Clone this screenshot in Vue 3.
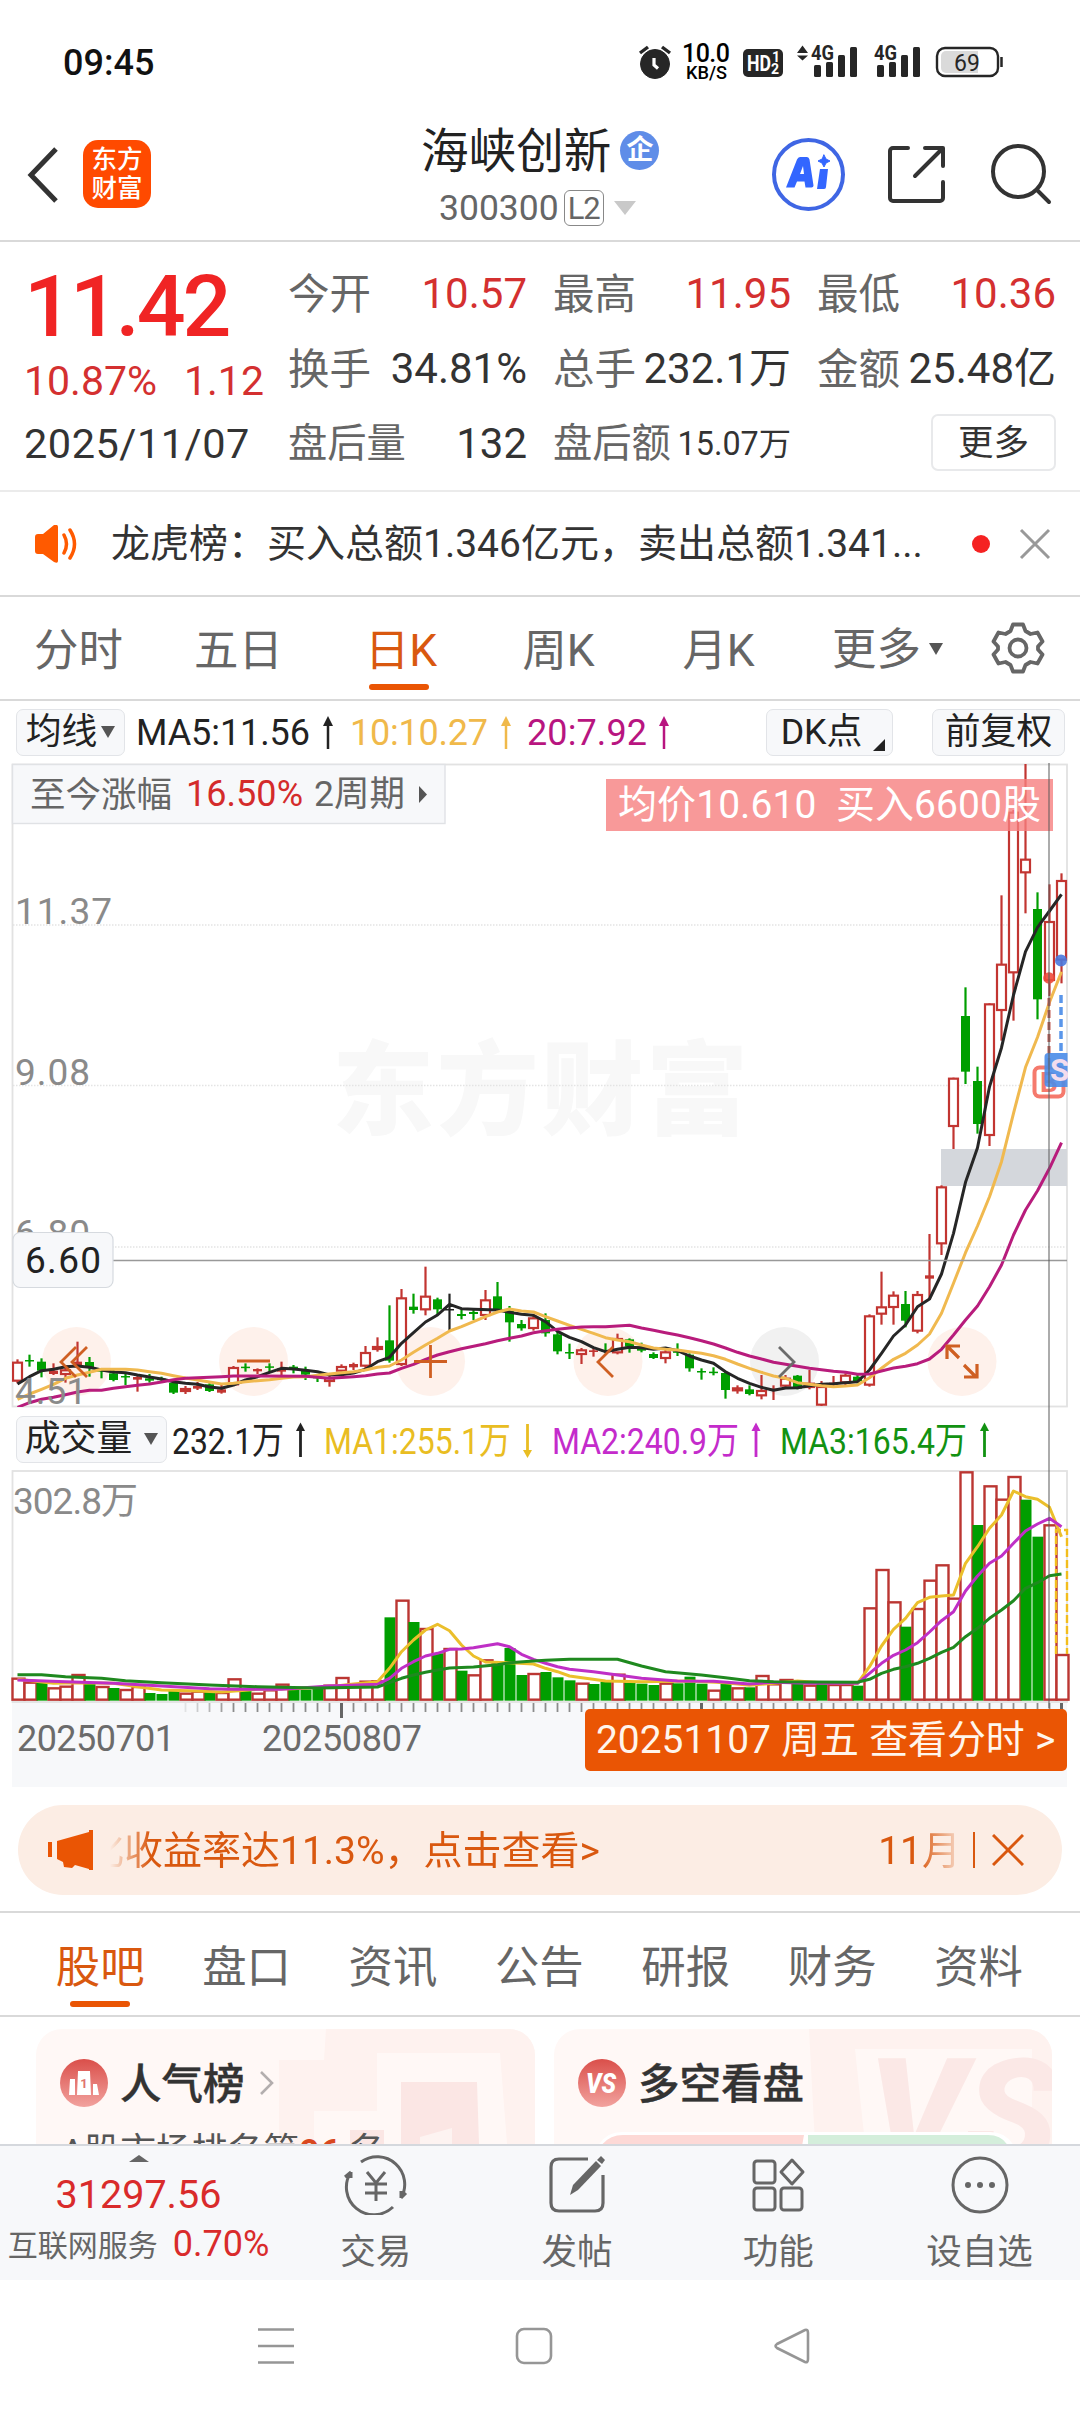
<script setup>
import { computed } from 'vue'

const stats = [
    { label: '今开', value: '10.57', up: true },
    { label: '最高', value: '11.95', up: true },
    { label: '最低', value: '10.36', up: true },
    { label: '换手', value: '34.81%' },
    { label: '总手', value: '232.1万' },
    { label: '金额', value: '25.48亿' },
    { label: '盘后量', value: '132', long: true },
    { label: '盘后额', value: '15.07万', long: true, small: true }
]
const periods = ['分时', '五日', '日K', '周K', '月K']
const sections = ['股吧', '盘口', '资讯', '公告', '研报', '财务', '资料']

const STEP = 12
const cx = (i) => 17.5 + i * STEP

// [kind, high, body top, body bottom, low] in thirds of a pixel from y = 1120
const rows = [
    'r 718 725 785 790', 'g 704 720 723 740', 'g 715 725 752 772', 'r 730 752 762 765', 'r 735 748 765 788',
    'r 665 725 735 740', 'g 711 726 742 770', 'g 745 750 755 775', 'g 750 760 780 784', 'g 759 768 771 795',
    'r 765 771 779 815', 'g 762 775 782 788', 'g 770 776 779 787', 'g 780 789 818 822', 'r 798 804 816 822',
    'r 786 798 806 810', 'g 790 793 813 816', 'r 795 808 818 821', 'r 738 741 796 798', 'g 730 740 744 755',
    'r 745 747 754 762', 'g 730 739 743 758', 'r 725 745 755 768', 'g 735 740 750 760', 'g 740 752 764 780',
    'g 762 770 775 786', 'r 768 772 786 800', 'r 733 738 755 760', 'r 728 732 742 750', 'r 678 696 740 745',
    'r 652 678 690 695', 'g 556 661 722 728', 'r 507 532 735 738', 'g 521 560 570 581', 'r 440 527 571 586',
    'g 533 538 568 586', 'k 521 567 570 630', 'g 568 582 588 598', 'g 568 576 582 600', 'r 510 538 588 600',
    'g 486 529 572 574', 'g 558 572 607 665', 'g 600 612 625 632', 'r 588 592 627 632', 'g 580 600 640 650',
    'g 635 643 694 703', 'g 671 696 700 717', 'r 684 688 705 732', 'r 685 691 696 710', 'g 670 690 694 700',
    'r 641 654 700 703', 'g 655 658 680 698', 'g 668 680 692 697', 'g 697 702 714 717', 'r 690 694 717 730',
    'g 670 694 698 708', 'g 700 704 745 755', 'g 745 753 757 779', 'g 742 755 759 766', 'g 755 759 810 836',
    'r 796 802 814 821', 'g 796 808 822 826', 'r 765 810 829 838', 'r 796 806 808 840', 'r 765 773 800 804',
    'g 765 767 806 808', 'r 750 788 804 808', 'r 783 798 857 858', 'r 768 788 793 798', 'r 760 764 790 795',
    'g 762 770 784 790', 'r 583 586 797 800', 'r 455 559 584 614', 'r 514 524 564 614', 'g 513 552 602 622',
    'r 513 522 635 640', 'r 342 466 476 540', 'r 196 199 373 405', 'r -127 -127 21 87', 'g -398 -312 -145 -108',
    'g -160 -117 12 41', 'r -350 -350 48 78', 'r -674 -469 -327 -238', 'r -930 -925 -440 -298', 'r -1068 -784 -740 -620',
    'g -683 -633 -362 -302', 'r -707 -597 -417 -372', 'r -740 -720 -478 -410'
]
const colors = { r: '#c23531', g: '#009e00', k: '#222222' }
const ky = (v) => 1120 + v / 3

const candles = rows.map((row, i) => {
    const [kind, ...n] = row.split(' ')
    const [high, top, bottom, low] = n.map((v) => ky(Number(v)))
    const hollow = kind === 'r' && bottom - top > 3.5
    return {
        x: cx(i),
        high, top, bottom, low,
        color: colors[kind],
        fill: hollow ? '#ffffff' : colors[kind],
        inset: hollow ? 1 : 0
    }
})

// moving averages, "index:value" pairs
const toPoints = (str, base) => str.split(' ').map((p) => {
    const [i, v] = p.split(':').map(Number)
    return `${cx(i)},${(base + v / 3).toFixed(1)}`
}).join(' ')

const ma5 = toPoints('0:792 1:770 2:752 3:748 4:740 5:738 6:742 7:750 8:756 9:758 10:765 11:771 12:777 13:785 14:790 15:793 16:801 17:805 18:795 19:780 20:770 21:757 22:745 23:747 24:751 25:755 26:765 27:764 28:759 29:748 30:725 31:712 32:670 33:638 34:606 35:585 36:553 37:566 38:568 40:570 41:577 42:583 43:586 44:605 45:634 46:652 47:665 48:683 49:695 50:688 51:682 52:683 53:688 54:684 55:692 56:708 57:720 58:730 59:755 60:775 61:790 62:802 63:811 64:804 65:803 66:797 67:793 68:791 69:788 70:785 71:750 72:700 73:648 74:615 75:560 76:537 77:462 78:340 79:187 80:83 81:-100 82:-217 83:-375 84:-505 85:-578 86:-627 87:-677', 1120)
const ma10 = toPoints('0:838 1:822 2:808 3:793 4:775 5:765 6:757 7:748 9:748 10:750 11:755 12:760 13:767 14:774 15:780 16:786 17:792 18:790 19:785 20:782 21:779 22:775 23:771 24:770 25:766 26:762 27:758 28:755 29:750 30:742 31:738 32:720 33:697 34:675 35:655 36:633 37:620 38:605 39:590 40:576 41:567 42:573 43:576 44:590 45:603 46:616 47:628 48:640 49:653 50:660 51:665 52:675 53:684 54:688 55:690 56:695 57:700 58:707 59:718 60:732 61:745 62:757 63:768 64:775 65:788 66:793 67:797 68:800 69:798 70:795 71:773 72:745 73:718 74:700 75:675 76:642 77:580 78:490 79:398 80:318 81:230 82:125 83:-20 84:-158 85:-248 86:-353 87:-445', 1120)
const ma20 = toPoints('0:862 1:848 2:838 3:832 4:824 5:816 6:811 7:811 8:805 9:800 10:796 11:792 12:786 13:779 14:775 15:773 17:770 18:768 20:768 24:769 26:775 28:770 29:767 30:762 31:759 32:745 33:733 34:718 35:705 36:695 37:686 38:679 39:671 40:662 41:655 42:648 43:638 44:632 45:628 46:624 47:621 48:620 49:620 51:616 52:624 53:631 54:638 55:645 56:653 57:662 58:672 59:684 60:697 61:708 62:717 63:727 64:733 65:739 66:745 67:749 68:754 69:757 70:763 71:762 72:753 73:744 74:739 75:731 76:717 77:688 78:645 79:600 80:558 81:500 82:435 83:345 84:270 85:212 86:145 87:68', 1120)

const volTops = [
    833, 845, 846, 862, 857, 822, 850, 858, 864, 867, 858, 879, 882, 873, 878, 872, 874, 876, 835, 872, 878, 868,
    851, 870, 869, 867, 854, 831, 856, 842, 841, 652, 599, 666, 684, 760, 744, 812, 823, 778, 788, 744, 825, 819,
    816, 832, 841, 848, 852, 846, 821, 848, 851, 855, 848, 850, 830, 851, 869, 849, 862, 862, 825, 850, 837, 850,
    854, 850, 852, 852, 857, 622, 507, 604, 680, 624, 539, 493, 593, 214, 375, 256, 296, 228, 299, 410, 373, 762
]
// r = up day, g = down day, 22 per chunk
const volColors = [
    'rrgrrrgrgrrgggrrgrrgrr',
    'rgggrrrrrgrgrgrgrrgggr',
    'gggrggrgggrgggrgrgrrrg',
    'rgrrgrrrgrrrrrgrrrggrr'
].join('')
const bars = computed(() => volTops.map((t, i) => ({
    x: cx(i),
    y: 1400 + t / 3,
    h: (902 - t) / 3,
    up: volColors[i] === 'r'
})))
const vma1 = toPoints('0:838 3:850 5:848 8:850 10:860 12:870 15:873 17:876 20:868 23:866 26:860 28:852 30:845 31:805 32:755 33:720 34:690 35:673 36:692 37:735 38:768 39:786 41:788 43:792 44:805 45:815 46:828 49:843 52:845 56:843 59:848 61:856 63:850 65:843 67:848 70:850 71:800 72:738 73:688 74:655 75:608 76:592 77:588 78:585 79:490 80:440 81:385 82:345 83:273 84:290 85:298 86:322 87:410', 1400)
const vma2 = toPoints('0:840 4:845 8:850 12:858 16:866 18:868 22:868 26:858 30:853 31:835 32:805 33:785 34:768 35:760 36:748 37:747 38:743 39:737 40:731 41:740 42:763 43:778 44:790 45:800 46:808 48:815 50:825 52:835 55:843 58:844 61:852 63:847 66:850 70:850 71:820 72:790 73:766 74:750 75:728 76:696 77:662 78:635 79:573 80:528 81:490 82:468 83:430 84:393 85:372 86:355 87:380', 1400)
const vma3 = toPoints('0:824 2:824 4:830 7:835 9:842 12:848 16:855 20:860 25:864 30:861 31:848 32:835 33:825 34:817 35:810 36:804 38:801 40:794 41:788 43:783 44:781 46:778 50:778 52:798 54:815 57:825 59:833 61:842 63:845 66:846 70:847 71:838 72:820 73:808 74:800 75:790 76:775 77:757 78:742 79:710 80:685 81:655 82:630 83:602 84:565 85:548 86:527 87:522', 1400)

const ticks = Array.from({ length: 74 }, (_, n) => {
    const i = n + 14
    return { x: cx(i), big: i === 27 || i === 57 || i === 87, fade: Math.min(1, (n + 1) / 5) }
})
const grid = [925, 1085.5, 1247]
</script>

<template>
    <div class="phone">
        <header class="status">
            <span class="clock">09:45</span>
            <svg class="status-icons" width="400" height="60" viewBox="620 33 400 60">
                <g fill="#262626" stroke="#262626">
                    <circle cx="655" cy="64" r="14.5" />
                    <path d="M640 53l8-6M662 47l8 6" stroke-width="3.4" fill="none" />
                    <path d="M654 58v7l4 3.5" stroke="#fff" stroke-width="3.2" fill="none" />
                </g>
                <text x="682" y="62" font-size="25" font-weight="500" textLength="48">10.0</text>
                <text x="686" y="79" font-size="18.5" font-weight="500" textLength="41" lengthAdjust="spacingAndGlyphs">KB/S</text>
                <rect x="743" y="49" width="40" height="28" rx="5" fill="#262626" />
                <text x="747" y="71" font-size="22" font-weight="700" fill="#fff" textLength="24" lengthAdjust="spacingAndGlyphs">HD</text>
                <text x="772" y="62" font-size="14" font-weight="700" fill="#fff">1</text>
                <text x="771" y="74" font-size="14" font-weight="700" fill="#fff">2</text>
                <path d="M797 53l5.500-7.500 5.500 7.500zM797 55.500h11l-5.500 5z" fill="#262626" />
                <text x="811" y="60" font-size="21" font-weight="700" fill="#262626" textLength="23" lengthAdjust="spacingAndGlyphs">4G</text>
                <text x="874" y="60" font-size="21" font-weight="700" fill="#262626" textLength="23" lengthAdjust="spacingAndGlyphs">4G</text>
                <g fill="#262626">
                    <rect x="814" y="65" width="7" height="12" rx="1.500" />
                    <rect x="826" y="62" width="7" height="15" rx="1.500" />
                    <rect x="838" y="55" width="7" height="22" rx="1.500" />
                    <rect x="850" y="47" width="7" height="30" rx="1.500" />
                    <rect x="877" y="65" width="7" height="12" rx="1.500" />
                    <rect x="889" y="62" width="7" height="15" rx="1.500" />
                    <rect x="901" y="55" width="7" height="22" rx="1.500" />
                    <rect x="913" y="47" width="7" height="30" rx="1.500" />
                </g>
                <rect x="937" y="48" width="61" height="28" rx="8" fill="#fff" stroke="#262626" stroke-width="2.400" />
                <path d="M946 51h32v22h-32a5 5 0 0 1-5-5v-12a5 5 0 0 1 5-5z" fill="#dadada" />
                <path d="M1001.500 57v10" stroke="#262626" stroke-width="2.500" />
                <text x="967" y="70.500" font-size="23" fill="#262626" text-anchor="middle">69</text>
            </svg>
        </header>

        <div class="titlebar">
            <svg class="back" width="36" height="60" viewBox="0 0 36 60">
                <path d="M31 4L6 30l25 26" fill="none" stroke="#333" stroke-width="5" />
            </svg>
            <div class="logo"><span>东方</span><span>财富</span></div>
            <div class="name">
                <div class="name-row">海峡创新<i class="badge">企</i></div>
                <div class="code-row">300300<b>L2</b><i class="tri"></i></div>
            </div>
            <svg class="tools" width="290" height="80" viewBox="770 134 290 80" fill="none" stroke="#333" stroke-width="4" stroke-linecap="round" stroke-linejoin="round">
                <circle cx="808.500" cy="174.500" r="34.500" stroke="#3f66e4" />
                <path d="M786 187.500l11-28q1-2.500 3-2.500h7q2 0 2.500 2.500l4 26q0 2-2 2h-6l-1-6h-7.500l-2.500 6zM800 174h4l-1-8z" fill="#3366ff" stroke="none" fill-rule="evenodd" />
                <path d="M820 169h8l-2 18q0 2-2 2h-7z" fill="#3366ff" stroke="none" />
                <path d="M824 155l2 4 4 2-4 2-2 4-2-4-4-2 4-2z" fill="#3366ff" stroke="#3366ff" stroke-width="1" />
                <path d="M908 148h-15a3 3 0 0 0-3 3v47a3 3 0 0 0 3 3h47a3 3 0 0 0 3-3v-16M925 148h18v18M942 149l-27 27" />
                <circle cx="1018.500" cy="171.500" r="25.500" />
                <path d="M1037 190l12 12" />
            </svg>
        </div>

        <section class="quote">
            <div class="price">
                <div class="last">11.42</div>
                <div class="change"><span>10.87%</span><span>1.12</span></div>
                <div class="date">2025/11/07</div>
            </div>
            <div class="stats">
                <div v-for="s in stats" :key="s.label" class="stat">
                    <span class="label" :class="{ long: s.long }">{{ s.label }}</span>
                    <span class="value" :class="{ up: s.up, small: s.small }">{{ s.value }}</span>
                </div>
                <div class="stat more-cell"><button class="more">更多</button></div>
            </div>
        </section>

        <section class="notice">
            <svg width="46" height="38" viewBox="33 524 46 38">
                <path d="M35 536q0-3 3-3h5l11-9q4-1 4 2v34q0 3-4 1l-11-8h-5q-3 0-3-3z" fill="#ff5a00" />
                <path d="M64 534q5 9 0 18M70 529q9 14 0 28" fill="none" stroke="#ff5a00" stroke-width="3.500" stroke-linecap="round" />
            </svg>
            <span class="notice-text">龙虎榜：买入总额1.346亿元，卖出总额1.341...</span>
            <i class="dot"></i>
            <svg width="32" height="32" viewBox="0 0 32 32">
                <path d="M2 2l28 28M30 2L2 30" stroke="#999" stroke-width="3" />
            </svg>
        </section>

        <nav class="periods">
            <div v-for="p in periods" :key="p" class="period" :class="{ active: p === '日K' }">{{ p }}</div>
            <div class="period-more">更多<i></i></div>
            <svg width="56" height="56" viewBox="-28 -28 56 56" fill="none" stroke="#666" stroke-width="3.800" stroke-linejoin="round">
                <path d="M-5-23.500h10l2.500 6.500 5 3 7-1.500 5 9-4.500 5v3l4.500 5-5 9-7-1.500-5 3L5 23.500H-5L-7.500 17l-5-3-7 1.500-5-9 4.500-5v-3l-4.500-5 5-9 7 1.500 5-3z" />
                <circle r="8.500" />
            </svg>
        </nav>

        <div class="charts">
            <div class="ma-row">
                <button class="chip avg">均线<i></i></button>
                <svg class="ma-texts" width="570" height="62" viewBox="130 701 570 62">
                    <text x="136" y="745" font-size="36" fill="#222" textLength="174">MA5:11.56</text>
                    <text x="350" y="745" font-size="36" fill="#f0b94a" textLength="138">10:10.27</text>
                    <text x="527" y="745" font-size="36" fill="#b81580" textLength="120">20:7.92</text>
                    <g stroke-width="2.500">
                        <path d="M328 749v-28" stroke="#222" /><path d="M323 726l5-10 5 10z" fill="#222" />
                        <path d="M506 749v-28" stroke="#f0b94a" /><path d="M501 726l5-10 5 10z" fill="#f0b94a" />
                        <path d="M664 749v-28" stroke="#b81580" /><path d="M659 726l5-10 5 10z" fill="#b81580" />
                    </g>
                </svg>
                <button class="chip dk">DK点<i></i></button>
                <button class="chip adj">前复权</button>
            </div>

            <svg class="kline" width="1080" height="645" viewBox="0 763 1080 645">
                <defs>
                    <clipPath id="kclip"><rect x="12" y="764" width="1056" height="643" /></clipPath>
                </defs>
                <text x="540" y="1127" text-anchor="middle" font-size="102" font-weight="900" fill="#f8f8f8" textLength="416">东方财富</text>
                <line v-for="g in grid" :key="g" x1="13" x2="1067" :y1="g" :y2="g" stroke="#e4e4e4" stroke-width="1.500" stroke-dasharray="1.500 1.500" />
                <rect x="12.500" y="764.500" width="1054.500" height="642" fill="none" stroke="#e2e2e2" stroke-width="1.800" />
                <circle v-for="x in [76.500, 253.500, 430.500, 608, 962]" :key="x" :cx="x" cy="1361.500" r="34.500" fill="#fef1eb" />
                <circle cx="784.500" cy="1361.500" r="34.500" fill="#f1f1f1" />
                <rect x="941" y="1149" width="126" height="37" fill="#d4d7dc" />
                <g clip-path="url(#kclip)">
                    <g v-for="(c, i) in candles" :key="i">
                        <line :x1="c.x" :x2="c.x" :y1="c.high" :y2="c.low" :stroke="c.color" stroke-width="2.200" />
                        <rect
                            :x="c.x - 4.5" :y="c.top + c.inset"
                            :width="9" :height="Math.max(1.5, c.bottom - c.top - c.inset * 2)"
                            :fill="c.fill" :stroke="c.inset ? c.color : 'none'" stroke-width="2.200"
                        />
                    </g>
                    <g fill="none" stroke-width="3" stroke-linejoin="round">
                        <polyline :points="ma5" stroke="#262626" />
                        <polyline :points="ma10" stroke="#f0b94f" />
                        <polyline :points="ma20" stroke="#b81c7c" />
                    </g>
                </g>
                <!-- trade markers -->
                <g>
                    <circle cx="1049" cy="978" r="5.800" fill="#ee4b3c" opacity="0.9" />
                    <circle cx="1061" cy="960.500" r="6" fill="#4a78dd" opacity="0.9" />
                    <path d="M1049 998v70" stroke="#c25a50" stroke-width="3" stroke-dasharray="8 4" />
                    <path d="M1061 995v58" stroke="#5a96ea" stroke-width="3.500" stroke-dasharray="8 4" />
                    <rect x="1034.500" y="1067.500" width="29" height="29" rx="5" fill="#fff" stroke="#f57a6d" stroke-width="4" />
                    <text x="1049" y="1092" font-size="28" font-weight="700" fill="#f57a6d" text-anchor="middle">B</text>
                    <path d="M1067.500 1053h-19a4 4 0 0 0-4 4v26a4 4 0 0 0 4 4h19z" fill="#4a8ce8" fill-opacity="0.9" />
                    <svg x="1044" y="1053" width="24" height="34" viewBox="1044 1053 24 34">
                        <text x="1050" y="1081" font-size="31" font-weight="700" fill="#f3dcee">S</text>
                    </svg>
                </g>
                <g font-size="37" fill="#8a8a8a">
                    <text x="15" y="924" textLength="97">11.37</text>
                    <text x="15" y="1085" textLength="75">9.08</text>
                    <text x="15" y="1246" textLength="75">6.80</text>
                    <text x="15" y="1404" textLength="72">4.51</text>
                </g>
                <!-- chart controls -->
                <g fill="none" stroke="#cf5f22" stroke-width="2.800">
                    <path d="M76 1347l-15 15 15 15M87 1347l-15 15 15 15" />
                    <path d="M237 1361h33M414 1361.500h33M430.500 1345v33" />
                    <path d="M613 1347l-15 15 15 15" />
                    <path d="M779 1347l15 15-15 15" stroke="#6b6b6b" />
                    <path d="M947 1359v-13h13M947 1346l12 12M977 1364v13h-13M964 1365l12 12" stroke-width="3.200" />
                </g>
                <line x1="113" x2="1067" y1="1260.500" y2="1260.500" stroke="#999" stroke-width="1.600" />
                <rect x="13" y="1232.500" width="100" height="55" rx="7" fill="#f7f8fa" stroke="#d6dadf" stroke-width="1.200" />
                <text x="25" y="1272.500" font-size="37" fill="#222" textLength="76">6.60</text>
                <!-- buy price banner -->
                <rect x="606" y="779" width="447" height="52" fill="#f68080" opacity="0.8" />
                <text x="618" y="818" font-size="39" fill="#fff" textLength="423">均价10.610&#160;&#160;买入6600股</text>
                <!-- gain since -->
                <rect x="12.500" y="764.500" width="432.500" height="59" fill="#f7f8fa" stroke="#e0e2e5" stroke-width="1.400" />
                <text x="30" y="807" font-size="35.500" fill="#666">至今涨幅</text>
                <text x="186" y="806" font-size="36" fill="#d42b2b" textLength="117">16.50%</text>
                <text x="314" y="806" font-size="35.500" fill="#666">2周期</text>
                <path d="M419 786l8 8.500-8 8.500z" fill="#555" />
            </svg>

            <div class="vol-row">
                <button class="chip vol">成交量<i></i></button>
                <svg width="900" height="62" viewBox="168 1408 900 62">
                    <g font-size="37">
                        <text x="172" y="1453.500" fill="#222" textLength="112" lengthAdjust="spacingAndGlyphs">232.1万</text>
                        <text x="324" y="1453.500" fill="#e9bd22" textLength="187" lengthAdjust="spacingAndGlyphs">MA1:255.1万</text>
                        <text x="552" y="1453.500" fill="#c42bcb" textLength="187" lengthAdjust="spacingAndGlyphs">MA2:240.9万</text>
                        <text x="780" y="1453.500" fill="#129212" textLength="187" lengthAdjust="spacingAndGlyphs">MA3:165.4万</text>
                    </g>
                    <g stroke-width="2.800">
                        <path d="M300.500 1457v-26" stroke="#222" /><path d="M296 1431l4.500-8.500 4.500 8.500z" fill="#222" />
                        <path d="M527.500 1424v26" stroke="#e9bd22" /><path d="M523 1450l4.500 8 4.500-8z" fill="#e9bd22" />
                        <path d="M756 1457v-26" stroke="#c42bcb" /><path d="M751.500 1431l4.500-8.500 4.500 8.500z" fill="#c42bcb" />
                        <path d="M984.500 1457v-26" stroke="#129212" /><path d="M980 1431l4.500-8.500 4.500 8.500z" fill="#129212" />
                    </g>
                </svg>
            </div>

            <svg class="volume" width="1080" height="317" viewBox="0 1470 1080 317">
                <rect x="12" y="1702" width="1055" height="85" fill="#f7f8fa" />
                <rect x="12.500" y="1471" width="1054.500" height="231" fill="none" stroke="#e2e2e2" stroke-width="1.800" />
                <text x="13" y="1514" font-size="37" fill="#8a8a8a" textLength="125">302.8万</text>
                <g v-for="(b, i) in bars" :key="i">
                    <rect v-if="b.up" :x="b.x - 5" :y="b.y + 1" width="12" :height="b.h - 2" fill="#fff" stroke="#bb3632" stroke-width="2.400" />
                    <rect v-else :x="b.x - 5" :y="b.y" width="11" :height="b.h" fill="#009e00" />
                </g>
                <path d="M1056 1654v-124h11v124" fill="none" stroke="#f2bd1d" stroke-width="2.400" stroke-dasharray="8 3" />
                <g fill="none" stroke-width="3" stroke-linejoin="round">
                    <polyline :points="vma1" stroke="#ebbf2b" />
                    <polyline :points="vma2" stroke="#bf2fc6" />
                    <polyline :points="vma3" stroke="#1f891f" />
                </g>
                <line
                    v-for="t in ticks" :key="t.x" :x1="t.x" :x2="t.x" y1="1703" :y2="t.big ? 1718 : 1712"
                    :stroke="t.big ? '#666' : '#8c8c8c'" :stroke-width="t.big ? 3 : 1.8" :opacity="t.fade"
                />
                <text x="17" y="1751" font-size="36" fill="#6b6b6b" textLength="158">20250701</text>
                <text x="262" y="1751" font-size="36" fill="#6b6b6b" textLength="160">20250807</text>
            </svg>
            <div class="crosshair"></div>
            <div class="day-link">20251107 周五 查看分时 &gt;</div>
        </div>

        <section class="ad-wrap">
            <div class="ad">
                <svg width="46" height="40" viewBox="47 1830 46 40" fill="#ea5504">
                    <path d="M48 1842h4v15h-4zM57 1841l32-9h4v37h-4l-14-4-3 3-8-1-1-5-6-3z" />
                    <path d="M89 1830h4v40h-4z" />
                </svg>
                <div class="ad-text"><span class="roll">化收益率达11.3%，点击查看&gt;</span><span class="next">11月</span></div>
                <i class="ad-line"></i>
                <svg width="32" height="32" viewBox="0 0 32 32"><path d="M1 1l30 30M31 1L1 31" stroke="#d9580f" stroke-width="3" /></svg>
            </div>
        </section>

        <nav class="sections">
            <div v-for="s in sections" :key="s" :class="{ active: s === '股吧' }">{{ s }}</div>
        </nav>

        <section class="cards">
            <div class="card">
                <svg class="card-bg" width="499" height="115" viewBox="36 2029 499 115">
                    <path d="M326 2029h209v115h-28L500 2053H377v58h-63v33h-35V2060h45z" fill="#fef2ef" />
                    <path d="M401 2082h76l2 62h-78zM350 2130h34v14h-34z" fill="#fbe6e4" />
                    <path d="M420 2137l32-9v16h-32z" fill="#fdf3f1" />
                </svg>
                <div class="card-head">
                    <svg width="48" height="48" viewBox="0 0 48 48">
                        <defs><linearGradient id="red" x1="0" y1="0" x2="0" y2="1"><stop offset="0" stop-color="#da4f4a" /><stop offset="1" stop-color="#f2a29e" /></linearGradient></defs>
                        <circle cx="24" cy="24" r="24" fill="url(#red)" />
                        <path d="M10 20h5v16H9zM18 12h12l1 24H17zM33 25h4l2 11h-6z" fill="#fff" />
                        <text x="24" y="29" font-size="13" font-weight="700" fill="#e0746f" text-anchor="middle">1</text>
                    </svg>
                    <b>人气榜</b>
                    <svg class="arrow" width="16" height="26" viewBox="0 0 16 26"><path d="M2 2l11 11L2 24" fill="none" stroke="#b3aeae" stroke-width="2.600" /></svg>
                </div>
                <p>A股市场排名第<b>96</b> 名</p>
            </div>
            <div class="card">
                <svg class="card-bg" width="498" height="115" viewBox="554 2029 498 115">
                    <path d="M809 2029h243v115h-20V2049H855l10 95h-50z" fill="#fef2ef" />
                    <text x="868" y="2165" font-size="150" font-weight="900" font-style="italic" fill="#fbe8e6" textLength="190" lengthAdjust="spacingAndGlyphs">VS</text>
                    <path d="M598 2146q8-14 24-14h368q16 0 24 14" fill="#fff" />
                    <path d="M601 2146q8-11 22-11h181l-2 11z" fill="#fdd9d6" />
                    <path d="M808 2135h180q14 0 20 11H808z" fill="#d4eedb" />
                </svg>
                <div class="card-head">
                    <svg width="48" height="48" viewBox="0 0 48 48">
                        <circle cx="24" cy="24" r="24" fill="url(#red)" />
                        <text x="23" y="34" font-size="27" font-weight="900" font-style="italic" fill="#fff" text-anchor="middle" textLength="30" lengthAdjust="spacingAndGlyphs">VS</text>
                    </svg>
                    <b>多空看盘</b>
                </div>
            </div>
        </section>

        <footer class="toolbar">
            <div class="index">
                <i class="caret"></i>
                <div class="index-value">31297.56</div>
                <div class="index-name">互联网服务<span>0.70%</span></div>
            </div>
            <div class="tool">
                <svg width="68" height="60" viewBox="-34 -30 68 60" fill="none" stroke="#666" stroke-width="3">
                    <path d="M-15-23A27.500 27.500 0 0 1 25 13M25 13l5-5M25 13V6M17 22A27.500 27.500 0 0 1-25-13M-25-13l-6 5M-25-13v6" />
                    <path d="M-9-13L0-2l9-11M0-2v18M-11-1h22M-11 8h22" />
                </svg>
                <span>交易</span>
            </div>
            <div class="tool">
                <svg width="60" height="60" viewBox="-30 -30 60 60" fill="none" stroke="#666" stroke-width="3.200">
                    <path d="M11-26h-29q-8 0-8 8v36q0 8 8 8h36q8 0 8-8v-28" />
                    <path d="M-7 10l3-10 23-24 5 5L1 5z" fill="#666" stroke="none" />
                    <path d="M20-25l4-4 4 4-3 4z" fill="#666" stroke="none" />
                </svg>
                <span>发帖</span>
            </div>
            <div class="tool">
                <svg width="60" height="60" viewBox="-30 -30 60 60" fill="none" stroke="#666" stroke-width="3" stroke-linejoin="round">
                    <rect x="-24" y="-24" width="21" height="22" rx="3" /><rect x="-24" y="3" width="21" height="22" rx="3" /><rect x="3" y="3" width="21" height="22" rx="3" />
                    <path d="M14-25l11 12-11 12L3-13z" />
                </svg>
                <span>功能</span>
            </div>
            <div class="tool">
                <svg width="60" height="60" viewBox="-30 -30 60 60">
                    <circle r="27" fill="none" stroke="#666" stroke-width="3" />
                    <g fill="#666"><circle cx="-12" r="3" /><circle r="3" /><circle cx="12" r="3" /></g>
                </svg>
                <span>设自选</span>
            </div>
        </footer>

        <div class="sysnav">
            <svg width="1080" height="132" viewBox="0 2280 1080 132" fill="none" stroke="#969696" stroke-width="2.600">
                <path d="M258 2329.500h36M258 2346h36M258 2362.500h36" />
                <rect x="517" y="2329" width="34" height="34" rx="7" />
                <path d="M805 2330q3-1 3 3v26q0 4-3 3l-28-14q-3-2 0-4z" />
            </svg>
        </div>
    </div>
</template>

<style>
body {
    margin: 0;
    background: #fff;
}
</style>

<style scoped>
.phone {
    width: 1080px;
    height: 2412px;
    overflow: hidden;
    display: flex;
    flex-direction: column;
    background: #fff;
    color: #333;
    font-family: Roboto, "Noto Sans CJK SC", sans-serif;
    line-height: 1.2;
}
.phone > * { flex: none; box-sizing: border-box; }
.phone svg { display: block; flex: none; }
i { font-style: normal; }
button {
    font: inherit;
    color: inherit;
    padding: 0;
    box-sizing: border-box;
}

/* status bar */
.status {
    height: 108px;
    padding: 33px 60px 0 63px;
    display: flex;
    justify-content: space-between;
}
.clock {
    font-size: 36px;
    line-height: 61px;
    font-weight: 500;
    color: #111;
}

/* title bar */
.titlebar {
    height: 134px;
    padding-left: 25px;
    display: flex;
    border-bottom: 2px solid #d9d9d9;
}
.back { margin-top: 37px; }
.logo {
    width: 68px;
    height: 68px;
    margin: 32px 0 0 22px;
    border-radius: 15px;
    background: #ff4a00;
    color: #fff;
    font-size: 25.5px;
    font-weight: 500;
    line-height: 29px;
    display: flex;
    flex-direction: column;
    align-items: center;
    justify-content: center;
}
.name {
    width: 252px;
    margin-left: 270px;
}
.name-row {
    height: 60px;
    margin-top: 14px;
    font-size: 47.6px;
    line-height: 60px;
    color: #222;
    display: flex;
    align-items: center;
}
.badge {
    width: 39px;
    height: 39px;
    margin: 0 0 4px 9px;
    border-radius: 50%;
    background: #5f8de8;
    color: #fff;
    font-size: 27px;
    line-height: 38px;
    font-weight: 700;
    text-align: center;
}
.code-row {
    padding-left: 18px;
    margin-top: 6px;
    height: 40px;
    font-size: 35.5px;
    line-height: 40px;
    color: #666;
    display: flex;
    align-items: center;
}
.code-row b {
    width: 38px;
    height: 34px;
    margin-left: 5px;
    border: 1.5px solid #888;
    border-radius: 6px;
    font-size: 31px;
    line-height: 35px;
    font-weight: 400;
    letter-spacing: -1px;
    text-align: center;
}
.tri {
    margin-left: 10px;
    border: 11px solid transparent;
    border-top: 14px solid #c9c9c9;
    border-bottom: 0;
}
.tools { margin: 26px 0 0 97px; }

/* quote */
.quote {
    height: 250px;
    display: flex;
    border-bottom: 2px solid #ebebeb;
}
.price { width: 288px; padding-left: 24px; box-sizing: border-box; }
.last {
    height: 88px;
    margin-top: 21px;
    font-size: 86px;
    line-height: 88px;
    font-weight: 500;
    letter-spacing: -3px;
    color: #f02424;
}
.change {
    margin-top: -3px;
    height: 66px;
    font-size: 41px;
    line-height: 66px;
    color: #d43030;
    display: flex;
    gap: 27px;
}
.date {
    margin-top: -3px;
    height: 66px;
    font-size: 41.5px;
    line-height: 66px;
    letter-spacing: 0.5px;
}
.stats {
    padding-top: 15px;
    width: 768px;
    height: 234px;
    box-sizing: border-box;
    display: grid;
    grid-template-columns: 239px 238px 239px;
    grid-template-rows: 75px 75px 75px;
    column-gap: 26px;
}
.stat {
    display: flex;
    justify-content: space-between;
    align-items: center;
    white-space: nowrap;
}
.label { font-size: 41.5px; color: #666; }
.label.long { font-size: 39.3px; }
.value { font-size: 42px; }
.value.up { color: #d43030; }
.value.small { font-size: 32.3px; }
.more-cell { justify-content: flex-end; }
.more {
    width: 125px;
    height: 57px;
    margin-bottom: 4px;
    border: 2px solid #e8e9eb;
    border-radius: 7px;
    background: #fff;
    font-size: 35.5px;
    line-height: 55px;
}

/* notice */
.notice {
    height: 105px;
    padding-left: 33px;
    border-bottom: 2px solid #d9d9d9;
    display: flex;
    align-items: center;
}
.notice-text {
    width: 857px;
    margin: 2px 0 0 32px;
    font-size: 39px;
    white-space: nowrap;
}
.dot {
    width: 18px;
    height: 18px;
    margin: 0 29px 0 4px;
    border-radius: 50%;
    background: #f52222;
}

/* period tabs */
.periods {
    height: 104px;
    border-bottom: 2px solid #d9d9d9;
    display: grid;
    grid-template-columns: repeat(5, 160px) 190px 56px;
    align-items: center;
    font-size: 44.4px;
    color: #666;
}
.period {
    height: 102px;
    line-height: 108px;
    text-align: center;
    text-indent: -3px;
    position: relative;
}
.period.active { text-indent: 2px; }
.period.active, .sections .active { color: #d9580f; }
.period.active::after, .sections .active::after {
    content: "";
    position: absolute;
    left: 50%;
    bottom: 9px;
    width: 60px;
    height: 6px;
    margin-left: -31px;
    border-radius: 3px;
    background: #ea5504;
}
.period-more { display: flex; align-items: center; padding: 5px 0 0 32px; }
.period-more i {
    margin: 0 0 4px 8px;
    border: 7.5px solid transparent;
    border-top: 12px solid #555;
    border-bottom: 0;
}

/* charts */
.charts { position: relative; height: 1086px; }
.ma-row, .vol-row { height: 62px; display: flex; align-items: center; }
.chip {
    height: 47px;
    border: 1.5px solid #e2e4e8;
    border-radius: 7px;
    background: #f7f8fa;
    color: #222;
    font-size: 35.8px;
    line-height: 46px;
    white-space: nowrap;
    display: flex;
    align-items: center;
    justify-content: center;
}
.chip.avg { width: 109px; margin: 0 5px 0 16px; }
.chip.avg i, .chip.vol i {
    margin-left: 4px;
    border: 7.5px solid transparent;
    border-top: 12px solid #555;
    border-bottom: 0;
}
.chip.dk { width: 127px; margin-left: 66px; gap: 11px; padding-left: 7px; }
.chip.dk i {
    margin-top: 26px;
    border-left: 12px solid transparent;
    border-bottom: 12px solid #222;
}
.chip.adj { width: 133px; margin-left: 39px; }
.chip.vol { width: 151px; margin: 0 1px 0 16px; }
.chip.vol i { margin-left: 12px; }
.crosshair {
    position: absolute;
    left: 1048px;
    top: 62px;
    width: 2px;
    height: 945px;
    background: rgba(90, 90, 90, 0.5);
}
.day-link {
    position: absolute;
    left: 585px;
    top: 1008px;
    width: 482px;
    height: 62px;
    box-sizing: border-box;
    padding-left: 11px;
    border-radius: 5px;
    background: #ea5504;
    color: #fff5ec;
    font-size: 38.9px;
    line-height: 62px;
    word-spacing: 0.6px;
    white-space: nowrap;
}

/* ad strip */
.ad-wrap { height: 126px; padding: 18px; border-bottom: 2px solid #d9d9d9; }
.ad {
    height: 90px;
    padding: 0 38px 0 29px;
    border-radius: 45px;
    background: #fcede4;
    color: #d9580f;
    display: flex;
    align-items: center;
}
.ad-text {
    width: 851px;
    margin: 2px 0 0 17px;
    overflow: hidden;
    display: flex;
    justify-content: space-between;
    font-size: 39px;
    white-space: nowrap;
    -webkit-mask-image: linear-gradient(90deg, transparent 0, #000 40px, #000 808px, transparent 855px);
    mask-image: linear-gradient(90deg, transparent 0, #000 40px, #000 808px, transparent 855px);
}
.roll { margin-left: -25px; }
.ad-line { width: 2px; height: 36px; margin: 0 17px 0 12px; background: #d9580f; }

/* section tabs */
.sections {
    height: 104px;
    padding: 0 27px;
    border-bottom: 2px solid #d9d9d9;
    display: grid;
    grid-template-columns: repeat(7, 146.4px);
    font-size: 44.4px;
    line-height: 110px;
    color: #666;
    text-align: center;
}
.sections div { position: relative; height: 102px; }
.sections .active::after { bottom: 8px; margin-left: -30px; }

/* cards */
.cards {
    height: 127px;
    padding: 12px 28px 0 36px;
    display: grid;
    grid-template-columns: 499px 498px;
    gap: 19px;
    overflow: hidden;
}
.card {
    position: relative;
    height: 200px;
    border-radius: 26px;
    background: #fff8f6;
    overflow: hidden;
}
.card-bg { position: absolute; left: 0; top: 0; }
.card-head {
    position: relative;
    height: 48px;
    margin: 30px 0 0 24px;
    display: flex;
    align-items: center;
    font-size: 41.5px;
}
.card-head b { margin: 3px 0 0 12px; font-weight: 500; -webkit-text-stroke: 0.4px #333; }
.arrow { margin-left: 14px; }
.card p {
    position: relative;
    margin: 20px 0 0 25px;
    font-size: 35.8px;
    line-height: 50px;
    color: #555;
}
.card p b { color: #d9481f; }

/* toolbar */
.toolbar {
    height: 136px;
    border-top: 2px solid #d5d8dd;
    background: #f7f8fa;
    color: #666;
    display: grid;
    grid-template-columns: 275px repeat(4, 201.3px);
}
.index { display: flex; flex-direction: column; align-items: center; white-space: nowrap; padding-left: 2px; }
.caret {
    margin-top: 9px;
    border: 10px solid transparent;
    border-bottom: 7px solid #666;
    border-top: 0;
}
.index-value {
    margin-top: 8px;
    font-size: 39.5px;
    line-height: 50px;
    color: #d92b2b;
}
.index-name { font-size: 30px; line-height: 48px; }
.index-name span { margin-left: 15px; font-size: 36px; color: #d92b2b; }
.tool {
    padding-top: 9px;
    display: flex;
    flex-direction: column;
    align-items: center;
    font-size: 35.5px;
    line-height: 50px;
}
.tool span { margin-top: 12px; }
.sysnav { height: 132px; }
</style>
